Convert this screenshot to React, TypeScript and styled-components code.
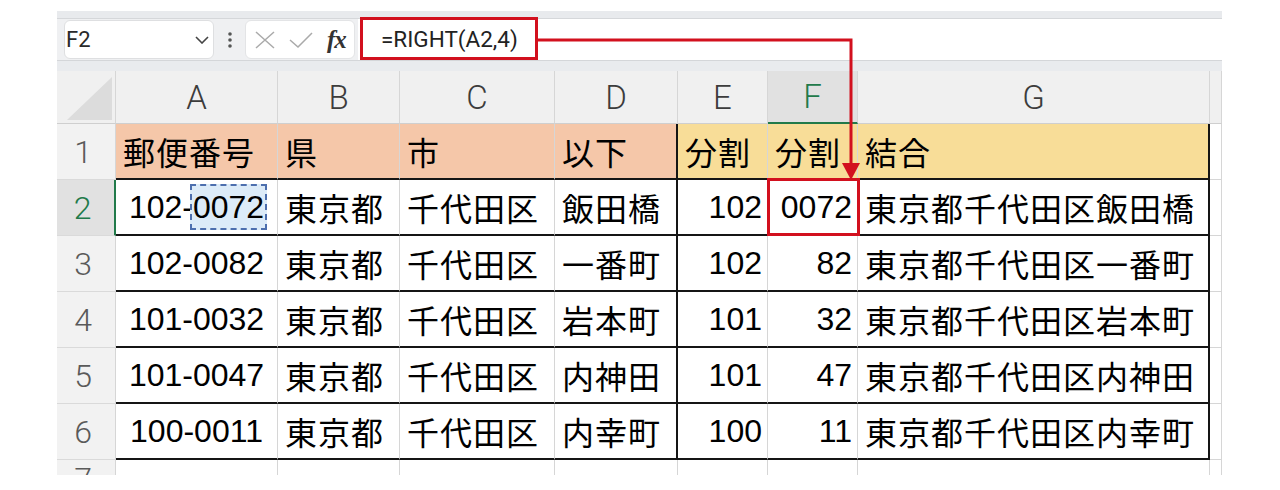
import React from 'react'
import styled, { createGlobalStyle, css } from 'styled-components'

const GlobalStyle = createGlobalStyle`
  body {
    margin: 0;
    background: #ffffff;
  }
`

const RED = '#d2101e'
const GREEN = '#217a4a'
const GRID = '#d6d6d6'
const INK = '#151515'

const Page = styled.div`
  position: relative;
  width: 1222px;
  height: 475px;
  padding: 11px 0 0 57px;
  box-sizing: border-box;
  overflow: hidden;
`

const Frame = styled.div`
  width: 1165px;
  display: flex;
  flex-direction: column;
`

const TopStrip = styled.div`
  height: 8px;
  background: #e8eaed;
  border-bottom: 1px solid #d5d7da;
  box-sizing: border-box;
`

const FormulaBar = styled.div`
  height: 41px;
  display: flex;
  background: #eff0f2;
  padding-left: 7px;
`

const NameBox = styled.div`
  width: 150px;
  margin: 1px 0 1px;
  box-sizing: border-box;
  background: #fff;
  border: 1px solid #dedfe1;
  border-radius: 6px;
  display: flex;
  align-items: center;
  justify-content: space-between;
  padding: 0 4px 0 1px;
  font-family: Roboto, 'Liberation Sans', sans-serif;
  font-size: 22px;
  color: #2a2a2a;
`

const Dots = styled.div`
  width: 31px;
  display: flex;
  align-items: center;
  justify-content: center;
`

const FxBox = styled.div`
  width: 110px;
  margin: 1px 0;
  box-sizing: border-box;
  background: #fff;
  border: 1px solid #e3e4e6;
  border-radius: 6px;
  display: flex;
  align-items: center;
  gap: 14px;
  padding-left: 9px;
`

const FxLabel = styled.span`
  font-family: 'Liberation Serif', serif;
  font-style: italic;
  font-weight: bold;
  font-size: 25px;
  color: #333;
  letter-spacing: -1px;
`

const FormulaInput = styled.div`
  flex: 1;
  margin-left: 3px;
  background: #fff;
  display: flex;
  align-items: flex-start;
  padding-left: 2px;
`

const FormulaText = styled.span`
  height: 43px;
  margin-top: -2px;
  width: 178px;
  box-sizing: border-box;
  border: 3px solid ${RED};
  display: flex;
  align-items: center;
  padding-left: 18px;
  font-family: Roboto, 'Liberation Sans', sans-serif;
  font-size: 22.5px;
  color: #222;
`

const Spacer = styled.div`
  height: 11px;
  background: #e9ebee;
  border-top: 1px solid #d4d6d9;
  box-sizing: border-box;
`

const Sheet = styled.div`
  display: grid;
  grid-template-columns: 59px 162px 122px 155px 123px 90px 90px 352px 12px;
  grid-template-rows: 53px repeat(6, 56px) 40px;
`

const HeadCell = styled.div<{ $active?: boolean }>`
  box-sizing: border-box;
  background: ${(p) => (p.$active ? '#e1e1e1' : '#f0f0f0')};
  border-right: 1px solid ${GRID};
  border-bottom: ${(p) => (p.$active ? `2px solid ${GREEN}` : '1px solid #cfcfcf')};
  display: flex;
  align-items: center;
  justify-content: center;
  font-family: Roboto, 'Liberation Sans', sans-serif;
  font-weight: 300;
  font-size: 33px;
  color: ${(p) => (p.$active ? GREEN : '#3c3c3c')};
`

const Corner = styled.div`
  box-sizing: border-box;
  background: #f0f0f0;
  border-right: 1px solid ${GRID};
  border-bottom: 1px solid #cfcfcf;
  display: flex;
  align-items: flex-end;
  justify-content: flex-end;
  padding: 0 3px 3px 0;
`

const RowHead = styled.div<{ $active?: boolean }>`
  box-sizing: border-box;
  background: ${(p) => (p.$active ? '#e1e1e1' : '#f2f2f2')};
  border-right: ${(p) => (p.$active ? `2px solid ${GREEN}` : `1px solid ${GRID}`)};
  border-bottom: 1px solid #dadada;
  display: flex;
  align-items: ${(p) => (p.$active === undefined ? 'flex-start' : 'center')};
  justify-content: center;
  padding-right: 6px;
  font-family: Roboto, 'Liberation Sans', sans-serif;
  font-weight: 300;
  font-size: 32px;
  color: ${(p) => (p.$active ? GREEN : '#5a5a5a')};
`

type Align = 'left' | 'right' | 'center'

const Cell = styled.div<{
  $fill?: string
  $align?: Align
  $edge?: boolean
  $line?: boolean
  $cjk?: boolean
  $marked?: boolean
}>`
  position: relative;
  box-sizing: border-box;
  background: ${(p) => p.$fill || '#fff'};
  border-right: ${(p) => (p.$edge ? `2px solid ${INK}` : `1px solid ${GRID}`)};
  border-bottom: ${(p) => (p.$line ? `2px solid ${INK}` : `1px solid ${GRID}`)};
  display: flex;
  align-items: center;
  justify-content: ${(p) =>
    p.$align === 'right' ? 'flex-end' : p.$align === 'center' ? 'center' : 'flex-start'};
  padding: ${(p) => (p.$align === 'right' ? '0 5px 0 0' : p.$align === 'center' ? '0' : '0 0 0 7px')};
  font-family: 'Liberation Sans', 'Noto Sans CJK JP', sans-serif;
  font-size: 32px;
  letter-spacing: ${(p) => (p.$cjk ? '1px' : '0')};
  color: #000;
  white-space: nowrap;
  ${(p) =>
    p.$marked &&
    css`
      z-index: 2;
      &::after {
        content: '';
        position: absolute;
        left: -1px;
        top: -2px;
        right: -3px;
        bottom: -2px;
        border: 3px solid ${RED};
      }
    `}
`

const RefMark = styled.span`
  display: inline-block;
  line-height: 36px;
  padding: 3px 1px;
  margin: -3px -3px;
  border: 2px dashed #4d6fae;
  background: #dcebf8;
`

const Arrow = styled.svg`
  position: absolute;
  left: 0;
  top: 0;
  z-index: 3;
  pointer-events: none;
`

const columns = ['A', 'B', 'C', 'D', 'E', 'F', 'G']

const header = ['郵便番号', '県', '市', '以下', '分割', '分割', '結合']

const rows = [
  ['102-0072', '東京都', '千代田区', '飯田橋', '102', '0072', '東京都千代田区飯田橋'],
  ['102-0082', '東京都', '千代田区', '一番町', '102', '82', '東京都千代田区一番町'],
  ['101-0032', '東京都', '千代田区', '岩本町', '101', '32', '東京都千代田区岩本町'],
  ['101-0047', '東京都', '千代田区', '内神田', '101', '47', '東京都千代田区内神田'],
  ['100-0011', '東京都', '千代田区', '内幸町', '100', '11', '東京都千代田区内幸町'],
]

const PEACH = '#f5c7a9'
const YELLOW = '#f8dd98'

const alignFor = (col: number): Align => (col === 0 ? 'center' : col === 4 || col === 5 ? 'right' : 'left')

const App: React.FC = () => {
  return (
    <>
      <GlobalStyle />
      <Page>
        <Frame>
          <TopStrip />
          <FormulaBar>
            <NameBox>
              <span>F2</span>
              <svg width="14" height="8" viewBox="0 0 14 8">
                <path d="M1 1 L7 7 L13 1" fill="none" stroke="#444" strokeWidth="1.6" />
              </svg>
            </NameBox>
            <Dots>
              <svg width="4" height="16" viewBox="0 0 4 16">
                <circle cx="2" cy="2" r="1.8" fill="#555" />
                <circle cx="2" cy="8" r="1.8" fill="#555" />
                <circle cx="2" cy="14" r="1.8" fill="#555" />
              </svg>
            </Dots>
            <FxBox>
              <svg width="20" height="18" viewBox="0 0 20 18">
                <path d="M1 1 L19 17 M19 1 L1 17" stroke="#aaa" strokeWidth="1.5" fill="none" />
              </svg>
              <svg width="24" height="16" viewBox="0 0 24 16">
                <path d="M1 8 L9 15 L23 1" stroke="#aaa" strokeWidth="1.5" fill="none" />
              </svg>
              <FxLabel>fx</FxLabel>
            </FxBox>
            <FormulaInput>
              <FormulaText>=RIGHT(A2,4)</FormulaText>
            </FormulaInput>
          </FormulaBar>
          <Spacer />
          <Sheet>
            <Corner>
              <svg width="45" height="43" viewBox="0 0 45 43">
                <polygon points="45,0 45,43 0,43" fill="#dcdcdc" />
              </svg>
            </Corner>
            {columns.map((c) => (
              <HeadCell key={c} $active={c === 'F'}>
                {c}
              </HeadCell>
            ))}
            <HeadCell />

            <RowHead $active={false}>1</RowHead>
            {header.map((h, i) => (
              <Cell key={i} $fill={i < 4 ? PEACH : YELLOW} $edge={i === 3 || i === 6} $line $cjk>
                {h}
              </Cell>
            ))}
            <Cell />

            {rows.map((r, ri) => (
              <React.Fragment key={ri}>
                <RowHead $active={ri === 0}>{ri + 2}</RowHead>
                {r.map((v, ci) => (
                  <Cell
                    key={ci}
                    $align={alignFor(ci)}
                    $edge={ci === 3 || ci === 6}
                    $line
                    $cjk={ci > 0 && ci !== 4 && ci !== 5}
                    $marked={ri === 0 && ci === 5}
                  >
                    {ri === 0 && ci === 0 ? (
                      <>
                        102-<RefMark>0072</RefMark>
                      </>
                    ) : (
                      v
                    )}
                  </Cell>
                ))}
                <Cell />
              </React.Fragment>
            ))}

            <RowHead>7</RowHead>
            {columns.map((c) => (
              <Cell key={c} />
            ))}
            <Cell />
          </Sheet>
        </Frame>
        <Arrow width="1222" height="475" viewBox="0 0 1222 475">
          <path d="M538 40 H851 V166" fill="none" stroke={RED} strokeWidth="3" />
          <polygon points="842,163 860,163 851,180" fill={RED} />
        </Arrow>
      </Page>
    </>
  )
}

export default App
